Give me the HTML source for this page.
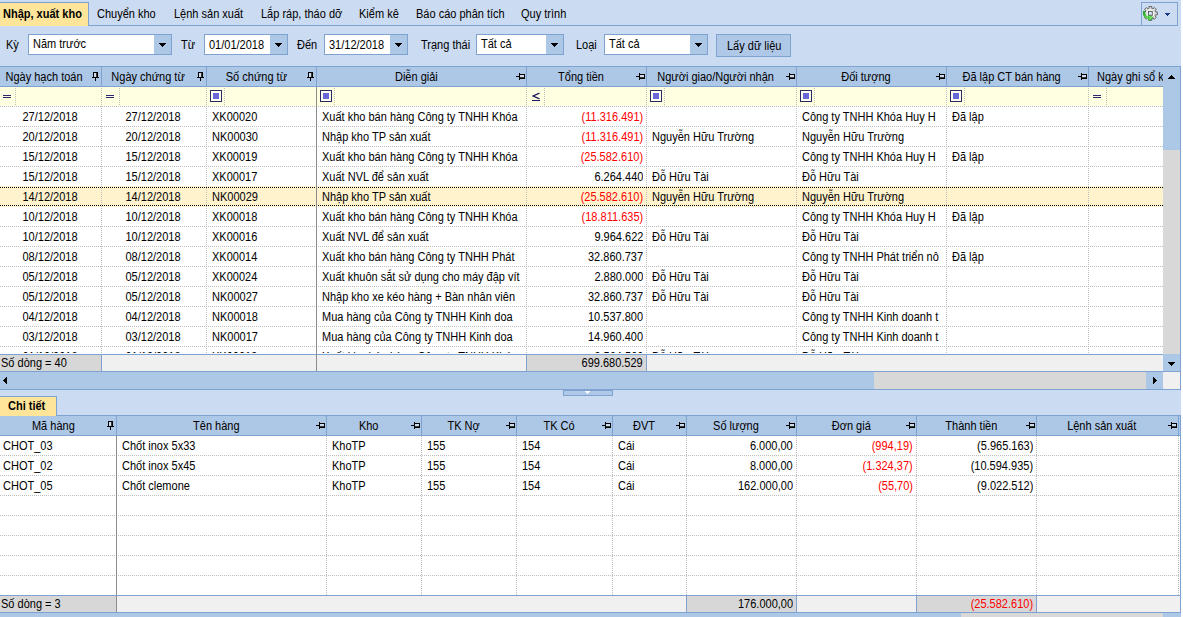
<!DOCTYPE html><html><head><meta charset="utf-8"><style>
html,body{margin:0;padding:0;}
body{width:1183px;height:617px;position:relative;overflow:hidden;background:#CBDBF1;font-family:"Liberation Sans",sans-serif;font-size:12px;color:#000;}
div{box-sizing:border-box;}
.t{position:absolute;white-space:nowrap;line-height:13px;}
.c{position:absolute;white-space:nowrap;overflow:hidden;}
.hl{position:absolute;height:1px;background-image:linear-gradient(to right,#BEBEBE 50%,transparent 50%);background-size:2px 1px;}
.vl{position:absolute;width:1px;background-image:linear-gradient(to bottom,#BEBEBE 50%,transparent 50%);background-size:1px 2px;}
.tri{position:absolute;width:0;height:0;border-left:4px solid transparent;border-right:4px solid transparent;border-top:4px solid #000;}

</style></head><body>
<div style="position:absolute;left:1181px;top:0px;width:2px;height:617px;background:#FDFDFE;"></div>
<div style="position:absolute;left:0px;top:25px;width:1141px;height:1px;background:#7EA3D0;"></div>
<div style="position:absolute;left:0px;top:2px;width:89px;height:24px;background:#FFE59A;border-right:1px solid #7EA3D0;border-top:1px solid #7EA3D0;"></div>
<div class="t" style="left:3px;top:7px;font-weight:bold;"><span style="display:inline-block;transform:translateY(1px) scaleX(0.917);transform-origin:0 50%">Nhập, xuất kho</span></div>
<div class="t" style="left:97px;top:7px;"><span style="display:inline-block;transform:translateY(1px) scaleX(0.917);transform-origin:0 50%">Chuyển kho</span></div>
<div class="t" style="left:174px;top:7px;"><span style="display:inline-block;transform:translateY(1px) scaleX(0.917);transform-origin:0 50%">Lệnh sản xuất</span></div>
<div class="t" style="left:261px;top:7px;"><span style="display:inline-block;transform:translateY(1px) scaleX(0.917);transform-origin:0 50%">Lắp ráp, tháo dỡ</span></div>
<div class="t" style="left:359px;top:7px;"><span style="display:inline-block;transform:translateY(1px) scaleX(0.917);transform-origin:0 50%">Kiểm kê</span></div>
<div class="t" style="left:416px;top:7px;"><span style="display:inline-block;transform:translateY(1px) scaleX(0.917);transform-origin:0 50%">Báo cáo phân tích</span></div>
<div class="t" style="left:521px;top:7px;"><span style="display:inline-block;transform:translateY(1px) scaleX(0.917);transform-origin:0 50%">Quy trình</span></div>
<div style="position:absolute;left:1141px;top:2px;width:37px;height:24px;border:1px solid #7EA3D0;"></div>
<svg style="position:absolute;left:1143px;top:6px" width="16" height="16" viewBox="0 0 16 16">
<defs><linearGradient id="gg" x1="0" y1="0" x2="1" y2="1"><stop offset="0" stop-color="#1FA01F"/><stop offset="1" stop-color="#6EEA5A"/></linearGradient></defs>
<g transform="translate(7.4,7.4)">
<path d="M-1.68,-5.03 L-1.28,-5.14 L-1.48,-6.94 L1.48,-6.94 L1.28,-5.14 L2.36,-4.74 L2.73,-4.54 L3.87,-5.95 L5.95,-3.87 L4.54,-2.73 L5.03,-1.68 L5.14,-1.28 L6.94,-1.48 L6.94,1.48 L5.14,1.28 L4.74,2.36 L4.54,2.73 L5.95,3.87 L3.87,5.95 L2.73,4.54 L1.68,5.03 L1.28,5.14 L1.48,6.94 L-1.48,6.94 L-1.28,5.14 L-2.36,4.74 L-2.73,4.54 L-3.87,5.95 L-5.95,3.87 L-4.54,2.73 L-5.03,1.68 L-5.14,1.28 L-6.94,1.48 L-6.94,-1.48 L-5.14,-1.28 L-4.74,-2.36 L-4.54,-2.73 L-5.95,-3.87 L-3.87,-5.95 L-2.73,-4.54 Z" fill="#DEDEDE" stroke="#666" stroke-width="1"/>
<circle r="3.9" fill="#F0F0F0"/>
<rect x="-1.9" y="-1.9" width="3.8" height="3.8" fill="#D6E6F8" stroke="#555" stroke-width="0.9"/>
</g>
<path d="M0.9,5 Q0.7,11.8 6.6,12.1" fill="none" stroke="url(#gg)" stroke-width="2.4"/>
<path d="M5.6,8.9 L10.4,11.7 L5.9,14.7 Z" fill="#6EE85A" stroke="#1C961C" stroke-width="0.6"/>
</svg>
<svg style="position:absolute;left:1165px;top:13px" width="5" height="3" shape-rendering="crispEdges" fill="#16388A"><rect x="0" y="0" width="5" height="1"/><rect x="1" y="1" width="3" height="1"/><rect x="2" y="2" width="1" height="1"/></svg>
<div class="t" style="left:6px;top:38px;"><span style="display:inline-block;transform:translateY(1px) scaleX(0.917);transform-origin:0 50%">Kỳ</span></div>
<div style="position:absolute;left:28px;top:34px;width:144px;height:21px;background:#fff;border:1px solid #7EA3D0;"></div>
<div style="position:absolute;left:154px;top:35px;width:17px;height:19px;background:#ADC7E6;"></div>
<svg style="position:absolute;left:159px;top:43px" width="7" height="4" shape-rendering="crispEdges" fill="#000"><rect x="0" y="0" width="7" height="1"/><rect x="1" y="1" width="5" height="1"/><rect x="2" y="2" width="3" height="1"/><rect x="3" y="3" width="1" height="1"/></svg>
<div class="t" style="left:33px;top:37px;"><span style="display:inline-block;transform:translateY(1px) scaleX(0.917);transform-origin:0 50%">Năm trước</span></div>
<div class="t" style="left:181px;top:38px;"><span style="display:inline-block;transform:translateY(1px) scaleX(0.917);transform-origin:0 50%">Từ</span></div>
<div style="position:absolute;left:204px;top:34px;width:84px;height:21px;background:#fff;border:1px solid #7EA3D0;"></div>
<div style="position:absolute;left:270px;top:35px;width:17px;height:19px;background:#ADC7E6;"></div>
<svg style="position:absolute;left:275px;top:43px" width="7" height="4" shape-rendering="crispEdges" fill="#000"><rect x="0" y="0" width="7" height="1"/><rect x="1" y="1" width="5" height="1"/><rect x="2" y="2" width="3" height="1"/><rect x="3" y="3" width="1" height="1"/></svg>
<div class="t" style="left:209px;top:38px;"><span style="display:inline-block;transform:translateY(1px) scaleX(0.917);transform-origin:0 50%">01/01/2018</span></div>
<div class="t" style="left:297px;top:38px;"><span style="display:inline-block;transform:translateY(1px) scaleX(0.917);transform-origin:0 50%">Đến</span></div>
<div style="position:absolute;left:324px;top:34px;width:84px;height:21px;background:#fff;border:1px solid #7EA3D0;"></div>
<div style="position:absolute;left:390px;top:35px;width:17px;height:19px;background:#ADC7E6;"></div>
<svg style="position:absolute;left:395px;top:43px" width="7" height="4" shape-rendering="crispEdges" fill="#000"><rect x="0" y="0" width="7" height="1"/><rect x="1" y="1" width="5" height="1"/><rect x="2" y="2" width="3" height="1"/><rect x="3" y="3" width="1" height="1"/></svg>
<div class="t" style="left:329px;top:38px;"><span style="display:inline-block;transform:translateY(1px) scaleX(0.917);transform-origin:0 50%">31/12/2018</span></div>
<div class="t" style="left:421px;top:38px;"><span style="display:inline-block;transform:translateY(1px) scaleX(0.917);transform-origin:0 50%">Trạng thái</span></div>
<div style="position:absolute;left:476px;top:34px;width:88px;height:21px;background:#fff;border:1px solid #7EA3D0;"></div>
<div style="position:absolute;left:546px;top:35px;width:17px;height:19px;background:#ADC7E6;"></div>
<svg style="position:absolute;left:551px;top:43px" width="7" height="4" shape-rendering="crispEdges" fill="#000"><rect x="0" y="0" width="7" height="1"/><rect x="1" y="1" width="5" height="1"/><rect x="2" y="2" width="3" height="1"/><rect x="3" y="3" width="1" height="1"/></svg>
<div class="t" style="left:481px;top:37px;"><span style="display:inline-block;transform:translateY(1px) scaleX(0.917);transform-origin:0 50%">Tất cả</span></div>
<div class="t" style="left:576px;top:38px;"><span style="display:inline-block;transform:translateY(1px) scaleX(0.917);transform-origin:0 50%">Loại</span></div>
<div style="position:absolute;left:604px;top:34px;width:104px;height:21px;background:#fff;border:1px solid #7EA3D0;"></div>
<div style="position:absolute;left:690px;top:35px;width:17px;height:19px;background:#ADC7E6;"></div>
<svg style="position:absolute;left:695px;top:43px" width="7" height="4" shape-rendering="crispEdges" fill="#000"><rect x="0" y="0" width="7" height="1"/><rect x="1" y="1" width="5" height="1"/><rect x="2" y="2" width="3" height="1"/><rect x="3" y="3" width="1" height="1"/></svg>
<div class="t" style="left:609px;top:37px;"><span style="display:inline-block;transform:translateY(1px) scaleX(0.917);transform-origin:0 50%">Tất cả</span></div>
<div style="position:absolute;left:716px;top:34px;width:75px;height:23px;background:#B0C8E8;border:1px solid #7EA3D0;"></div>
<div class="t" style="left:727px;top:39px;"><span style="display:inline-block;transform:translateY(1px) scaleX(0.917);transform-origin:0 50%">Lấy dữ liệu</span></div>
<div style="position:absolute;left:0px;top:66px;width:1181px;height:21px;background:#ADC7E6;border-top:1px solid #7EA3D0;border-right:1px solid #7EA3D0;"></div>
<div style="position:absolute;left:0px;top:86px;width:1163px;height:1px;background:#7EA3D0;"></div>
<div class="c" style="left:-2px;top:67px;width:92px;height:19px;line-height:19px;text-align:center;"><span style="display:inline-block;transform:translateY(1px) scaleX(0.917);transform-origin:50% 50%">Ngày hạch toán</span></div>
<svg style="position:absolute;left:92px;top:72px" width="7" height="9" viewBox="0 0 7 9" shape-rendering="crispEdges"><rect x="1" y="0" width="5" height="6" fill="#000"/><rect x="2" y="1" width="2" height="4" fill="#CCDDF2"/><rect x="4" y="1" width="1" height="4" fill="#3A3A3A"/><rect x="0" y="5" width="7" height="1" fill="#000"/><rect x="3" y="6" width="1" height="3" fill="#000"/></svg>
<div style="position:absolute;left:101px;top:67px;width:1px;height:19px;background:#7EA3D0;"></div>
<div class="c" style="left:101px;top:67px;width:95px;height:19px;line-height:19px;text-align:center;"><span style="display:inline-block;transform:translateY(1px) scaleX(0.917);transform-origin:50% 50%">Ngày chứng từ</span></div>
<svg style="position:absolute;left:197px;top:72px" width="7" height="9" viewBox="0 0 7 9" shape-rendering="crispEdges"><rect x="1" y="0" width="5" height="6" fill="#000"/><rect x="2" y="1" width="2" height="4" fill="#CCDDF2"/><rect x="4" y="1" width="1" height="4" fill="#3A3A3A"/><rect x="0" y="5" width="7" height="1" fill="#000"/><rect x="3" y="6" width="1" height="3" fill="#000"/></svg>
<div style="position:absolute;left:206px;top:67px;width:1px;height:19px;background:#7EA3D0;"></div>
<div class="c" style="left:206px;top:67px;width:100px;height:19px;line-height:19px;text-align:center;"><span style="display:inline-block;transform:translateY(1px) scaleX(0.917);transform-origin:50% 50%">Số chứng từ</span></div>
<svg style="position:absolute;left:307px;top:72px" width="7" height="9" viewBox="0 0 7 9" shape-rendering="crispEdges"><rect x="1" y="0" width="5" height="6" fill="#000"/><rect x="2" y="1" width="2" height="4" fill="#CCDDF2"/><rect x="4" y="1" width="1" height="4" fill="#3A3A3A"/><rect x="0" y="5" width="7" height="1" fill="#000"/><rect x="3" y="6" width="1" height="3" fill="#000"/></svg>
<div style="position:absolute;left:316px;top:67px;width:1px;height:19px;background:#7EA3D0;"></div>
<div class="c" style="left:316px;top:67px;width:200px;height:19px;line-height:19px;text-align:center;"><span style="display:inline-block;transform:translateY(1px) scaleX(0.917);transform-origin:50% 50%">Diễn giải</span></div>
<svg style="position:absolute;left:516px;top:73px" width="9" height="7" viewBox="0 0 9 7" shape-rendering="crispEdges"><rect x="0" y="3" width="3" height="1" fill="#000"/><rect x="3" y="0" width="1" height="7" fill="#000"/><rect x="4" y="1" width="5" height="5" fill="#000"/><rect x="4" y="2" width="4" height="2" fill="#CCDDF2"/><rect x="4" y="4" width="4" height="1" fill="#3A3A3A"/></svg>
<div style="position:absolute;left:526px;top:67px;width:1px;height:19px;background:#7EA3D0;"></div>
<div class="c" style="left:526px;top:67px;width:110px;height:19px;line-height:19px;text-align:center;"><span style="display:inline-block;transform:translateY(1px) scaleX(0.917);transform-origin:50% 50%">Tổng tiền</span></div>
<svg style="position:absolute;left:636px;top:73px" width="9" height="7" viewBox="0 0 9 7" shape-rendering="crispEdges"><rect x="0" y="3" width="3" height="1" fill="#000"/><rect x="3" y="0" width="1" height="7" fill="#000"/><rect x="4" y="1" width="5" height="5" fill="#000"/><rect x="4" y="2" width="4" height="2" fill="#CCDDF2"/><rect x="4" y="4" width="4" height="1" fill="#3A3A3A"/></svg>
<div style="position:absolute;left:646px;top:67px;width:1px;height:19px;background:#7EA3D0;"></div>
<div class="c" style="left:646px;top:67px;width:140px;height:19px;line-height:19px;text-align:center;"><span style="display:inline-block;transform:translateY(1px) scaleX(0.917);transform-origin:50% 50%">Người giao/Người nhận</span></div>
<svg style="position:absolute;left:786px;top:73px" width="9" height="7" viewBox="0 0 9 7" shape-rendering="crispEdges"><rect x="0" y="3" width="3" height="1" fill="#000"/><rect x="3" y="0" width="1" height="7" fill="#000"/><rect x="4" y="1" width="5" height="5" fill="#000"/><rect x="4" y="2" width="4" height="2" fill="#CCDDF2"/><rect x="4" y="4" width="4" height="1" fill="#3A3A3A"/></svg>
<div style="position:absolute;left:796px;top:67px;width:1px;height:19px;background:#7EA3D0;"></div>
<div class="c" style="left:796px;top:67px;width:140px;height:19px;line-height:19px;text-align:center;"><span style="display:inline-block;transform:translateY(1px) scaleX(0.917);transform-origin:50% 50%">Đối tượng</span></div>
<svg style="position:absolute;left:936px;top:73px" width="9" height="7" viewBox="0 0 9 7" shape-rendering="crispEdges"><rect x="0" y="3" width="3" height="1" fill="#000"/><rect x="3" y="0" width="1" height="7" fill="#000"/><rect x="4" y="1" width="5" height="5" fill="#000"/><rect x="4" y="2" width="4" height="2" fill="#CCDDF2"/><rect x="4" y="4" width="4" height="1" fill="#3A3A3A"/></svg>
<div style="position:absolute;left:946px;top:67px;width:1px;height:19px;background:#7EA3D0;"></div>
<div class="c" style="left:946px;top:67px;width:132px;height:19px;line-height:19px;text-align:center;"><span style="display:inline-block;transform:translateY(1px) scaleX(0.917);transform-origin:50% 50%">Đã lập CT bán hàng</span></div>
<svg style="position:absolute;left:1078px;top:73px" width="9" height="7" viewBox="0 0 9 7" shape-rendering="crispEdges"><rect x="0" y="3" width="3" height="1" fill="#000"/><rect x="3" y="0" width="1" height="7" fill="#000"/><rect x="4" y="1" width="5" height="5" fill="#000"/><rect x="4" y="2" width="4" height="2" fill="#CCDDF2"/><rect x="4" y="4" width="4" height="1" fill="#3A3A3A"/></svg>
<div style="position:absolute;left:1088px;top:67px;width:1px;height:19px;background:#7EA3D0;"></div>
<div class="c" style="left:1097px;top:67px;width:66px;height:19px;line-height:19px;width:66px;"><span style="display:inline-block;transform:translateY(1px) scaleX(0.917);transform-origin:0 50%">Ngày ghi sổ kho</span></div>
<div style="position:absolute;left:0px;top:87px;width:1163px;height:267px;background:#fff;"></div>
<div style="position:absolute;left:0px;top:87px;width:1163px;height:19px;background:#FFFFE1;"></div>
<div style="position:absolute;left:3px;top:95px;width:8px;height:1px;background:#2A2A6A;"></div>
<div style="position:absolute;left:3px;top:97px;width:8px;height:1px;background:#2A2A6A;"></div>
<div class="vl" style="left:15px;top:88px;height:17px;"></div>
<div style="position:absolute;left:106px;top:95px;width:8px;height:1px;background:#2A2A6A;"></div>
<div style="position:absolute;left:106px;top:97px;width:8px;height:1px;background:#2A2A6A;"></div>
<div class="vl" style="left:119px;top:88px;height:17px;"></div>
<div class="vl" style="left:101px;top:88px;height:17px;"></div>
<div style="position:absolute;left:210px;top:90px;width:12px;height:12px;border:1px solid #2A2860;background:#FFFDF0;"></div>
<div style="position:absolute;left:213px;top:93px;width:6px;height:6px;background:#6666D6;"></div>
<div class="vl" style="left:224px;top:88px;height:17px;"></div>
<div class="vl" style="left:206px;top:88px;height:17px;"></div>
<div style="position:absolute;left:320px;top:90px;width:12px;height:12px;border:1px solid #2A2860;background:#FFFDF0;"></div>
<div style="position:absolute;left:323px;top:93px;width:6px;height:6px;background:#6666D6;"></div>
<div class="vl" style="left:334px;top:88px;height:17px;"></div>
<svg style="position:absolute;left:532px;top:92px" width="9" height="10" viewBox="0 0 9 10"><polyline points="7.5,1.2 1.2,4 7.5,6.8" fill="none" stroke="#1E1E5E" stroke-width="1.3"/><rect x="0" y="8" width="8" height="1" fill="#1E1E5E"/></svg>
<div class="vl" style="left:544px;top:88px;height:17px;"></div>
<div class="vl" style="left:526px;top:88px;height:17px;"></div>
<div style="position:absolute;left:650px;top:90px;width:12px;height:12px;border:1px solid #2A2860;background:#FFFDF0;"></div>
<div style="position:absolute;left:653px;top:93px;width:6px;height:6px;background:#6666D6;"></div>
<div class="vl" style="left:664px;top:88px;height:17px;"></div>
<div class="vl" style="left:646px;top:88px;height:17px;"></div>
<div style="position:absolute;left:800px;top:90px;width:12px;height:12px;border:1px solid #2A2860;background:#FFFDF0;"></div>
<div style="position:absolute;left:803px;top:93px;width:6px;height:6px;background:#6666D6;"></div>
<div class="vl" style="left:814px;top:88px;height:17px;"></div>
<div class="vl" style="left:796px;top:88px;height:17px;"></div>
<div style="position:absolute;left:950px;top:90px;width:12px;height:12px;border:1px solid #2A2860;background:#FFFDF0;"></div>
<div style="position:absolute;left:953px;top:93px;width:6px;height:6px;background:#6666D6;"></div>
<div class="vl" style="left:964px;top:88px;height:17px;"></div>
<div class="vl" style="left:946px;top:88px;height:17px;"></div>
<div style="position:absolute;left:1093px;top:95px;width:8px;height:1px;background:#2A2A6A;"></div>
<div style="position:absolute;left:1093px;top:97px;width:8px;height:1px;background:#2A2A6A;"></div>
<div class="vl" style="left:1106px;top:88px;height:17px;"></div>
<div class="vl" style="left:1088px;top:88px;height:17px;"></div>
<div style="position:absolute;left:0;top:106px;width:1163px;height:247px;overflow:hidden;">
<div class="c" style="left:0px;top:0px;width:101px;height:20px;line-height:20px;text-align:center;"><span style="display:inline-block;transform:translateY(1px) scaleX(0.917);transform-origin:50% 50%">27/12/2018</span></div>
<div class="c" style="left:101px;top:0px;width:105px;height:20px;line-height:20px;text-align:center;"><span style="display:inline-block;transform:translateY(1px) scaleX(0.917);transform-origin:50% 50%">27/12/2018</span></div>
<div class="c" style="left:212px;top:0px;width:104px;height:20px;line-height:20px;"><span style="display:inline-block;transform:translateY(1px) scaleX(0.917);transform-origin:0 50%">XK00020</span></div>
<div class="c" style="left:322px;top:0px;width:204px;height:20px;line-height:20px;"><span style="display:inline-block;transform:translateY(1px) scaleX(0.917);transform-origin:0 50%">Xuất kho bán hàng Công ty TNHH Khóa</span></div>
<div class="c" style="left:526px;top:0px;width:117px;height:20px;line-height:20px;text-align:right;color:#F00;"><span style="display:inline-block;transform:translateY(1px) scaleX(0.917);transform-origin:100% 50%">(11.316.491)</span></div>
<div class="c" style="left:802px;top:0px;width:144px;height:20px;line-height:20px;"><span style="display:inline-block;transform:translateY(1px) scaleX(0.917);transform-origin:0 50%">Công ty TNHH Khóa Huy H</span></div>
<div class="c" style="left:952px;top:0px;width:136px;height:20px;line-height:20px;"><span style="display:inline-block;transform:translateY(1px) scaleX(0.917);transform-origin:0 50%">Đã lập</span></div>
<div class="hl" style="left:0;top:20px;width:1163px;"></div>
<div class="c" style="left:0px;top:20px;width:101px;height:20px;line-height:20px;text-align:center;"><span style="display:inline-block;transform:translateY(1px) scaleX(0.917);transform-origin:50% 50%">20/12/2018</span></div>
<div class="c" style="left:101px;top:20px;width:105px;height:20px;line-height:20px;text-align:center;"><span style="display:inline-block;transform:translateY(1px) scaleX(0.917);transform-origin:50% 50%">20/12/2018</span></div>
<div class="c" style="left:212px;top:20px;width:104px;height:20px;line-height:20px;"><span style="display:inline-block;transform:translateY(1px) scaleX(0.917);transform-origin:0 50%">NK00030</span></div>
<div class="c" style="left:322px;top:20px;width:204px;height:20px;line-height:20px;"><span style="display:inline-block;transform:translateY(1px) scaleX(0.917);transform-origin:0 50%">Nhập kho TP sản xuất</span></div>
<div class="c" style="left:526px;top:20px;width:117px;height:20px;line-height:20px;text-align:right;color:#F00;"><span style="display:inline-block;transform:translateY(1px) scaleX(0.917);transform-origin:100% 50%">(11.316.491)</span></div>
<div class="c" style="left:652px;top:20px;width:144px;height:20px;line-height:20px;"><span style="display:inline-block;transform:translateY(1px) scaleX(0.917);transform-origin:0 50%">Nguyễn Hữu Trường</span></div>
<div class="c" style="left:802px;top:20px;width:144px;height:20px;line-height:20px;"><span style="display:inline-block;transform:translateY(1px) scaleX(0.917);transform-origin:0 50%">Nguyễn Hữu Trường</span></div>
<div class="hl" style="left:0;top:40px;width:1163px;"></div>
<div class="c" style="left:0px;top:40px;width:101px;height:20px;line-height:20px;text-align:center;"><span style="display:inline-block;transform:translateY(1px) scaleX(0.917);transform-origin:50% 50%">15/12/2018</span></div>
<div class="c" style="left:101px;top:40px;width:105px;height:20px;line-height:20px;text-align:center;"><span style="display:inline-block;transform:translateY(1px) scaleX(0.917);transform-origin:50% 50%">15/12/2018</span></div>
<div class="c" style="left:212px;top:40px;width:104px;height:20px;line-height:20px;"><span style="display:inline-block;transform:translateY(1px) scaleX(0.917);transform-origin:0 50%">XK00019</span></div>
<div class="c" style="left:322px;top:40px;width:204px;height:20px;line-height:20px;"><span style="display:inline-block;transform:translateY(1px) scaleX(0.917);transform-origin:0 50%">Xuất kho bán hàng Công ty TNHH Khóa</span></div>
<div class="c" style="left:526px;top:40px;width:117px;height:20px;line-height:20px;text-align:right;color:#F00;"><span style="display:inline-block;transform:translateY(1px) scaleX(0.917);transform-origin:100% 50%">(25.582.610)</span></div>
<div class="c" style="left:802px;top:40px;width:144px;height:20px;line-height:20px;"><span style="display:inline-block;transform:translateY(1px) scaleX(0.917);transform-origin:0 50%">Công ty TNHH Khóa Huy H</span></div>
<div class="c" style="left:952px;top:40px;width:136px;height:20px;line-height:20px;"><span style="display:inline-block;transform:translateY(1px) scaleX(0.917);transform-origin:0 50%">Đã lập</span></div>
<div class="hl" style="left:0;top:60px;width:1163px;"></div>
<div class="c" style="left:0px;top:60px;width:101px;height:20px;line-height:20px;text-align:center;"><span style="display:inline-block;transform:translateY(1px) scaleX(0.917);transform-origin:50% 50%">15/12/2018</span></div>
<div class="c" style="left:101px;top:60px;width:105px;height:20px;line-height:20px;text-align:center;"><span style="display:inline-block;transform:translateY(1px) scaleX(0.917);transform-origin:50% 50%">15/12/2018</span></div>
<div class="c" style="left:212px;top:60px;width:104px;height:20px;line-height:20px;"><span style="display:inline-block;transform:translateY(1px) scaleX(0.917);transform-origin:0 50%">XK00017</span></div>
<div class="c" style="left:322px;top:60px;width:204px;height:20px;line-height:20px;"><span style="display:inline-block;transform:translateY(1px) scaleX(0.917);transform-origin:0 50%">Xuất NVL để sản xuất</span></div>
<div class="c" style="left:526px;top:60px;width:117px;height:20px;line-height:20px;text-align:right;"><span style="display:inline-block;transform:translateY(1px) scaleX(0.917);transform-origin:100% 50%">6.264.440</span></div>
<div class="c" style="left:652px;top:60px;width:144px;height:20px;line-height:20px;"><span style="display:inline-block;transform:translateY(1px) scaleX(0.917);transform-origin:0 50%">Đỗ Hữu Tài</span></div>
<div class="c" style="left:802px;top:60px;width:144px;height:20px;line-height:20px;"><span style="display:inline-block;transform:translateY(1px) scaleX(0.917);transform-origin:0 50%">Đỗ Hữu Tài</span></div>
<div class="hl" style="left:0;top:80px;width:1163px;"></div>
<div style="position:absolute;left:0px;top:80px;width:1163px;height:21px;background:#FFF3CE;"></div>
<div class="c" style="left:0px;top:80px;width:101px;height:20px;line-height:20px;text-align:center;"><span style="display:inline-block;transform:translateY(1px) scaleX(0.917);transform-origin:50% 50%">14/12/2018</span></div>
<div class="c" style="left:101px;top:80px;width:105px;height:20px;line-height:20px;text-align:center;"><span style="display:inline-block;transform:translateY(1px) scaleX(0.917);transform-origin:50% 50%">14/12/2018</span></div>
<div class="c" style="left:212px;top:80px;width:104px;height:20px;line-height:20px;"><span style="display:inline-block;transform:translateY(1px) scaleX(0.917);transform-origin:0 50%">NK00029</span></div>
<div class="c" style="left:322px;top:80px;width:204px;height:20px;line-height:20px;"><span style="display:inline-block;transform:translateY(1px) scaleX(0.917);transform-origin:0 50%">Nhập kho TP sản xuất</span></div>
<div class="c" style="left:526px;top:80px;width:117px;height:20px;line-height:20px;text-align:right;color:#F00;"><span style="display:inline-block;transform:translateY(1px) scaleX(0.917);transform-origin:100% 50%">(25.582.610)</span></div>
<div class="c" style="left:652px;top:80px;width:144px;height:20px;line-height:20px;"><span style="display:inline-block;transform:translateY(1px) scaleX(0.917);transform-origin:0 50%">Nguyễn Hữu Trường</span></div>
<div class="c" style="left:802px;top:80px;width:144px;height:20px;line-height:20px;"><span style="display:inline-block;transform:translateY(1px) scaleX(0.917);transform-origin:0 50%">Nguyễn Hữu Trường</span></div>
<div class="c" style="left:0px;top:100px;width:101px;height:20px;line-height:20px;text-align:center;"><span style="display:inline-block;transform:translateY(1px) scaleX(0.917);transform-origin:50% 50%">10/12/2018</span></div>
<div class="c" style="left:101px;top:100px;width:105px;height:20px;line-height:20px;text-align:center;"><span style="display:inline-block;transform:translateY(1px) scaleX(0.917);transform-origin:50% 50%">10/12/2018</span></div>
<div class="c" style="left:212px;top:100px;width:104px;height:20px;line-height:20px;"><span style="display:inline-block;transform:translateY(1px) scaleX(0.917);transform-origin:0 50%">XK00018</span></div>
<div class="c" style="left:322px;top:100px;width:204px;height:20px;line-height:20px;"><span style="display:inline-block;transform:translateY(1px) scaleX(0.917);transform-origin:0 50%">Xuất kho bán hàng Công ty TNHH Khóa</span></div>
<div class="c" style="left:526px;top:100px;width:117px;height:20px;line-height:20px;text-align:right;color:#F00;"><span style="display:inline-block;transform:translateY(1px) scaleX(0.917);transform-origin:100% 50%">(18.811.635)</span></div>
<div class="c" style="left:802px;top:100px;width:144px;height:20px;line-height:20px;"><span style="display:inline-block;transform:translateY(1px) scaleX(0.917);transform-origin:0 50%">Công ty TNHH Khóa Huy H</span></div>
<div class="c" style="left:952px;top:100px;width:136px;height:20px;line-height:20px;"><span style="display:inline-block;transform:translateY(1px) scaleX(0.917);transform-origin:0 50%">Đã lập</span></div>
<div class="hl" style="left:0;top:120px;width:1163px;"></div>
<div class="c" style="left:0px;top:120px;width:101px;height:20px;line-height:20px;text-align:center;"><span style="display:inline-block;transform:translateY(1px) scaleX(0.917);transform-origin:50% 50%">10/12/2018</span></div>
<div class="c" style="left:101px;top:120px;width:105px;height:20px;line-height:20px;text-align:center;"><span style="display:inline-block;transform:translateY(1px) scaleX(0.917);transform-origin:50% 50%">10/12/2018</span></div>
<div class="c" style="left:212px;top:120px;width:104px;height:20px;line-height:20px;"><span style="display:inline-block;transform:translateY(1px) scaleX(0.917);transform-origin:0 50%">XK00016</span></div>
<div class="c" style="left:322px;top:120px;width:204px;height:20px;line-height:20px;"><span style="display:inline-block;transform:translateY(1px) scaleX(0.917);transform-origin:0 50%">Xuất NVL để sản xuất</span></div>
<div class="c" style="left:526px;top:120px;width:117px;height:20px;line-height:20px;text-align:right;"><span style="display:inline-block;transform:translateY(1px) scaleX(0.917);transform-origin:100% 50%">9.964.622</span></div>
<div class="c" style="left:652px;top:120px;width:144px;height:20px;line-height:20px;"><span style="display:inline-block;transform:translateY(1px) scaleX(0.917);transform-origin:0 50%">Đỗ Hữu Tài</span></div>
<div class="c" style="left:802px;top:120px;width:144px;height:20px;line-height:20px;"><span style="display:inline-block;transform:translateY(1px) scaleX(0.917);transform-origin:0 50%">Đỗ Hữu Tài</span></div>
<div class="hl" style="left:0;top:140px;width:1163px;"></div>
<div class="c" style="left:0px;top:140px;width:101px;height:20px;line-height:20px;text-align:center;"><span style="display:inline-block;transform:translateY(1px) scaleX(0.917);transform-origin:50% 50%">08/12/2018</span></div>
<div class="c" style="left:101px;top:140px;width:105px;height:20px;line-height:20px;text-align:center;"><span style="display:inline-block;transform:translateY(1px) scaleX(0.917);transform-origin:50% 50%">08/12/2018</span></div>
<div class="c" style="left:212px;top:140px;width:104px;height:20px;line-height:20px;"><span style="display:inline-block;transform:translateY(1px) scaleX(0.917);transform-origin:0 50%">XK00014</span></div>
<div class="c" style="left:322px;top:140px;width:204px;height:20px;line-height:20px;"><span style="display:inline-block;transform:translateY(1px) scaleX(0.917);transform-origin:0 50%">Xuất kho bán hàng Công ty TNHH Phát</span></div>
<div class="c" style="left:526px;top:140px;width:117px;height:20px;line-height:20px;text-align:right;"><span style="display:inline-block;transform:translateY(1px) scaleX(0.917);transform-origin:100% 50%">32.860.737</span></div>
<div class="c" style="left:802px;top:140px;width:144px;height:20px;line-height:20px;"><span style="display:inline-block;transform:translateY(1px) scaleX(0.917);transform-origin:0 50%">Công ty TNHH Phát triển nô</span></div>
<div class="c" style="left:952px;top:140px;width:136px;height:20px;line-height:20px;"><span style="display:inline-block;transform:translateY(1px) scaleX(0.917);transform-origin:0 50%">Đã lập</span></div>
<div class="hl" style="left:0;top:160px;width:1163px;"></div>
<div class="c" style="left:0px;top:160px;width:101px;height:20px;line-height:20px;text-align:center;"><span style="display:inline-block;transform:translateY(1px) scaleX(0.917);transform-origin:50% 50%">05/12/2018</span></div>
<div class="c" style="left:101px;top:160px;width:105px;height:20px;line-height:20px;text-align:center;"><span style="display:inline-block;transform:translateY(1px) scaleX(0.917);transform-origin:50% 50%">05/12/2018</span></div>
<div class="c" style="left:212px;top:160px;width:104px;height:20px;line-height:20px;"><span style="display:inline-block;transform:translateY(1px) scaleX(0.917);transform-origin:0 50%">XK00024</span></div>
<div class="c" style="left:322px;top:160px;width:204px;height:20px;line-height:20px;"><span style="display:inline-block;transform:translateY(1px) scaleX(0.917);transform-origin:0 50%">Xuất khuôn sắt sử dụng cho máy đập vít</span></div>
<div class="c" style="left:526px;top:160px;width:117px;height:20px;line-height:20px;text-align:right;"><span style="display:inline-block;transform:translateY(1px) scaleX(0.917);transform-origin:100% 50%">2.880.000</span></div>
<div class="c" style="left:652px;top:160px;width:144px;height:20px;line-height:20px;"><span style="display:inline-block;transform:translateY(1px) scaleX(0.917);transform-origin:0 50%">Đỗ Hữu Tài</span></div>
<div class="c" style="left:802px;top:160px;width:144px;height:20px;line-height:20px;"><span style="display:inline-block;transform:translateY(1px) scaleX(0.917);transform-origin:0 50%">Đỗ Hữu Tài</span></div>
<div class="hl" style="left:0;top:180px;width:1163px;"></div>
<div class="c" style="left:0px;top:180px;width:101px;height:20px;line-height:20px;text-align:center;"><span style="display:inline-block;transform:translateY(1px) scaleX(0.917);transform-origin:50% 50%">05/12/2018</span></div>
<div class="c" style="left:101px;top:180px;width:105px;height:20px;line-height:20px;text-align:center;"><span style="display:inline-block;transform:translateY(1px) scaleX(0.917);transform-origin:50% 50%">05/12/2018</span></div>
<div class="c" style="left:212px;top:180px;width:104px;height:20px;line-height:20px;"><span style="display:inline-block;transform:translateY(1px) scaleX(0.917);transform-origin:0 50%">NK00027</span></div>
<div class="c" style="left:322px;top:180px;width:204px;height:20px;line-height:20px;"><span style="display:inline-block;transform:translateY(1px) scaleX(0.917);transform-origin:0 50%">Nhập kho xe kéo hàng + Bàn nhân viên</span></div>
<div class="c" style="left:526px;top:180px;width:117px;height:20px;line-height:20px;text-align:right;"><span style="display:inline-block;transform:translateY(1px) scaleX(0.917);transform-origin:100% 50%">32.860.737</span></div>
<div class="c" style="left:652px;top:180px;width:144px;height:20px;line-height:20px;"><span style="display:inline-block;transform:translateY(1px) scaleX(0.917);transform-origin:0 50%">Đỗ Hữu Tài</span></div>
<div class="c" style="left:802px;top:180px;width:144px;height:20px;line-height:20px;"><span style="display:inline-block;transform:translateY(1px) scaleX(0.917);transform-origin:0 50%">Đỗ Hữu Tài</span></div>
<div class="hl" style="left:0;top:200px;width:1163px;"></div>
<div class="c" style="left:0px;top:200px;width:101px;height:20px;line-height:20px;text-align:center;"><span style="display:inline-block;transform:translateY(1px) scaleX(0.917);transform-origin:50% 50%">04/12/2018</span></div>
<div class="c" style="left:101px;top:200px;width:105px;height:20px;line-height:20px;text-align:center;"><span style="display:inline-block;transform:translateY(1px) scaleX(0.917);transform-origin:50% 50%">04/12/2018</span></div>
<div class="c" style="left:212px;top:200px;width:104px;height:20px;line-height:20px;"><span style="display:inline-block;transform:translateY(1px) scaleX(0.917);transform-origin:0 50%">NK00018</span></div>
<div class="c" style="left:322px;top:200px;width:204px;height:20px;line-height:20px;"><span style="display:inline-block;transform:translateY(1px) scaleX(0.917);transform-origin:0 50%">Mua hàng của Công ty TNHH Kinh doa</span></div>
<div class="c" style="left:526px;top:200px;width:117px;height:20px;line-height:20px;text-align:right;"><span style="display:inline-block;transform:translateY(1px) scaleX(0.917);transform-origin:100% 50%">10.537.800</span></div>
<div class="c" style="left:802px;top:200px;width:144px;height:20px;line-height:20px;"><span style="display:inline-block;transform:translateY(1px) scaleX(0.917);transform-origin:0 50%">Công ty TNHH Kinh doanh t</span></div>
<div class="hl" style="left:0;top:220px;width:1163px;"></div>
<div class="c" style="left:0px;top:220px;width:101px;height:20px;line-height:20px;text-align:center;"><span style="display:inline-block;transform:translateY(1px) scaleX(0.917);transform-origin:50% 50%">03/12/2018</span></div>
<div class="c" style="left:101px;top:220px;width:105px;height:20px;line-height:20px;text-align:center;"><span style="display:inline-block;transform:translateY(1px) scaleX(0.917);transform-origin:50% 50%">03/12/2018</span></div>
<div class="c" style="left:212px;top:220px;width:104px;height:20px;line-height:20px;"><span style="display:inline-block;transform:translateY(1px) scaleX(0.917);transform-origin:0 50%">NK00017</span></div>
<div class="c" style="left:322px;top:220px;width:204px;height:20px;line-height:20px;"><span style="display:inline-block;transform:translateY(1px) scaleX(0.917);transform-origin:0 50%">Mua hàng của Công ty TNHH Kinh doa</span></div>
<div class="c" style="left:526px;top:220px;width:117px;height:20px;line-height:20px;text-align:right;"><span style="display:inline-block;transform:translateY(1px) scaleX(0.917);transform-origin:100% 50%">14.960.400</span></div>
<div class="c" style="left:802px;top:220px;width:144px;height:20px;line-height:20px;"><span style="display:inline-block;transform:translateY(1px) scaleX(0.917);transform-origin:0 50%">Công ty TNHH Kinh doanh t</span></div>
<div class="hl" style="left:0;top:240px;width:1163px;"></div>
<div class="c" style="left:0px;top:240px;width:101px;height:20px;line-height:20px;text-align:center;"><span style="display:inline-block;transform:translateY(1px) scaleX(0.917);transform-origin:50% 50%">01/12/2018</span></div>
<div class="c" style="left:101px;top:240px;width:105px;height:20px;line-height:20px;text-align:center;"><span style="display:inline-block;transform:translateY(1px) scaleX(0.917);transform-origin:50% 50%">01/12/2018</span></div>
<div class="c" style="left:212px;top:240px;width:104px;height:20px;line-height:20px;"><span style="display:inline-block;transform:translateY(1px) scaleX(0.917);transform-origin:0 50%">XK00013</span></div>
<div class="c" style="left:322px;top:240px;width:204px;height:20px;line-height:20px;"><span style="display:inline-block;transform:translateY(1px) scaleX(0.917);transform-origin:0 50%">Xuất kho bán hàng Công ty TNHH Khóa</span></div>
<div class="c" style="left:526px;top:240px;width:117px;height:20px;line-height:20px;text-align:right;"><span style="display:inline-block;transform:translateY(1px) scaleX(0.917);transform-origin:100% 50%">9.564.500</span></div>
<div class="c" style="left:652px;top:240px;width:144px;height:20px;line-height:20px;"><span style="display:inline-block;transform:translateY(1px) scaleX(0.917);transform-origin:0 50%">Đỗ Hữu Tài</span></div>
<div class="c" style="left:802px;top:240px;width:144px;height:20px;line-height:20px;"><span style="display:inline-block;transform:translateY(1px) scaleX(0.917);transform-origin:0 50%">Đỗ Hữu Tài</span></div>
<div class="hl" style="left:0;top:260px;width:1163px;"></div>
<div class="vl" style="left:101px;top:0;height:248px;"></div>
<div class="vl" style="left:206px;top:0;height:248px;"></div>
<div class="vl" style="left:526px;top:0;height:248px;"></div>
<div class="vl" style="left:646px;top:0;height:248px;"></div>
<div class="vl" style="left:796px;top:0;height:248px;"></div>
<div class="vl" style="left:946px;top:0;height:248px;"></div>
<div class="vl" style="left:1088px;top:0;height:248px;"></div>
<div class="hl" style="left:0;top:81px;width:1163px;background-image:linear-gradient(to right,#000 50%,transparent 50%);"></div>
<div class="hl" style="left:0;top:99px;width:1163px;background-image:linear-gradient(to right,#000 50%,transparent 50%);"></div>
</div>
<div class="hl" style="left:0;top:106px;width:1163px;"></div>
<div style="position:absolute;left:316px;top:87px;width:1px;height:284px;background:#8C8C8C;"></div>
<div style="position:absolute;left:1163px;top:67px;width:17px;height:83px;background:#ADC7E6;"></div>
<svg style="position:absolute;left:1168px;top:75px" width="7" height="4" shape-rendering="crispEdges" fill="#000"><rect x="0" y="3" width="7" height="1"/><rect x="1" y="2" width="5" height="1"/><rect x="2" y="1" width="3" height="1"/><rect x="3" y="0" width="1" height="1"/></svg>
<div style="position:absolute;left:1163px;top:150px;width:17px;height:204px;background:#D8D8D8;"></div>
<div style="position:absolute;left:1180px;top:66px;width:1px;height:323px;background:#7EA3D0;"></div>
<div style="position:absolute;left:0px;top:354px;width:1163px;height:17px;background:#F0F0F0;border-top:1px solid #7EA3D0;"></div>
<div style="position:absolute;left:0px;top:355px;width:101px;height:16px;background:#D7D7D7;"></div>
<div style="position:absolute;left:101px;top:355px;width:1px;height:16px;background:#7EA3D0;"></div>
<div style="position:absolute;left:316px;top:354px;width:1px;height:17px;background:#8C8C8C;"></div>
<div style="position:absolute;left:526px;top:355px;width:121px;height:16px;background:#D7D7D7;border-left:1px solid #7EA3D0;border-right:1px solid #7EA3D0;"></div>
<div class="t" style="left:1px;top:356px;"><span style="display:inline-block;transform:translateY(1px) scaleX(0.917);transform-origin:0 50%">Số dòng = 40</span></div>
<div class="c" style="left:526px;top:354px;width:117px;height:16px;line-height:16px;text-align:right;"><span style="display:inline-block;transform:translateY(1px) scaleX(0.917);transform-origin:100% 50%">699.680.529</span></div>
<div style="position:absolute;left:1163px;top:354px;width:17px;height:17px;background:#ADC7E6;"></div>
<svg style="position:absolute;left:1168px;top:362px" width="7" height="4" shape-rendering="crispEdges" fill="#000"><rect x="0" y="0" width="7" height="1"/><rect x="1" y="1" width="5" height="1"/><rect x="2" y="2" width="3" height="1"/><rect x="3" y="3" width="1" height="1"/></svg>
<div style="position:absolute;left:0px;top:371px;width:1181px;height:19px;background:#D8D8D8;border-top:1px solid #7EA3D0;border-bottom:1px solid #7EA3D0;border-right:1px solid #7EA3D0;"></div>
<div style="position:absolute;left:0px;top:372px;width:874px;height:17px;background:#ADC7E6;"></div>
<div style="position:absolute;left:1146px;top:372px;width:17px;height:17px;background:#ADC7E6;"></div>
<div style="position:absolute;left:1163px;top:372px;width:17px;height:17px;background:#F0F0F0;"></div>
<svg style="position:absolute;left:3px;top:377px" width="4" height="7" shape-rendering="crispEdges" fill="#000"><rect x="3" y="0" width="1" height="7"/><rect x="2" y="1" width="1" height="5"/><rect x="1" y="2" width="1" height="3"/><rect x="0" y="3" width="1" height="1"/></svg>
<svg style="position:absolute;left:1153px;top:377px" width="4" height="7" shape-rendering="crispEdges" fill="#000"><rect x="0" y="0" width="1" height="7"/><rect x="1" y="1" width="1" height="5"/><rect x="2" y="2" width="1" height="3"/><rect x="3" y="3" width="1" height="1"/></svg>
<div style="position:absolute;left:563px;top:390px;width:50px;height:6px;background:#AFC8E8;border:1px solid #7EA3D0;"></div>
<svg style="position:absolute;left:585px;top:391px" width="5" height="3" shape-rendering="crispEdges" fill="#fff"><rect x="0" y="0" width="5" height="1"/><rect x="1" y="1" width="3" height="1"/><rect x="2" y="2" width="1" height="1"/></svg>
<div style="position:absolute;left:0px;top:415px;width:1181px;height:21px;background:#ADC7E6;border-top:1px solid #7EA3D0;border-bottom:1px solid #7EA3D0;border-right:1px solid #7EA3D0;"></div>
<div style="position:absolute;left:0px;top:396px;width:57px;height:20px;background:#FFE59A;border-top:1px solid #7EA3D0;border-right:1px solid #7EA3D0;"></div>
<div class="t" style="left:8px;top:399px;font-weight:bold;"><span style="display:inline-block;transform:translateY(1px) scaleX(0.917);transform-origin:0 50%">Chi tiết</span></div>
<div class="c" style="left:0px;top:416px;width:106px;height:19px;line-height:19px;text-align:center;"><span style="display:inline-block;transform:translateY(1px) scaleX(0.917);transform-origin:50% 50%">Mã hàng</span></div>
<svg style="position:absolute;left:107px;top:421px" width="7" height="9" viewBox="0 0 7 9" shape-rendering="crispEdges"><rect x="1" y="0" width="5" height="6" fill="#000"/><rect x="2" y="1" width="2" height="4" fill="#CCDDF2"/><rect x="4" y="1" width="1" height="4" fill="#3A3A3A"/><rect x="0" y="5" width="7" height="1" fill="#000"/><rect x="3" y="6" width="1" height="3" fill="#000"/></svg>
<div style="position:absolute;left:116px;top:416px;width:1px;height:19px;background:#7EA3D0;"></div>
<div class="c" style="left:116px;top:416px;width:200px;height:19px;line-height:19px;text-align:center;"><span style="display:inline-block;transform:translateY(1px) scaleX(0.917);transform-origin:50% 50%">Tên hàng</span></div>
<svg style="position:absolute;left:316px;top:422px" width="9" height="7" viewBox="0 0 9 7" shape-rendering="crispEdges"><rect x="0" y="3" width="3" height="1" fill="#000"/><rect x="3" y="0" width="1" height="7" fill="#000"/><rect x="4" y="1" width="5" height="5" fill="#000"/><rect x="4" y="2" width="4" height="2" fill="#CCDDF2"/><rect x="4" y="4" width="4" height="1" fill="#3A3A3A"/></svg>
<div style="position:absolute;left:326px;top:416px;width:1px;height:19px;background:#7EA3D0;"></div>
<div class="c" style="left:326px;top:416px;width:85px;height:19px;line-height:19px;text-align:center;"><span style="display:inline-block;transform:translateY(1px) scaleX(0.917);transform-origin:50% 50%">Kho</span></div>
<svg style="position:absolute;left:411px;top:422px" width="9" height="7" viewBox="0 0 9 7" shape-rendering="crispEdges"><rect x="0" y="3" width="3" height="1" fill="#000"/><rect x="3" y="0" width="1" height="7" fill="#000"/><rect x="4" y="1" width="5" height="5" fill="#000"/><rect x="4" y="2" width="4" height="2" fill="#CCDDF2"/><rect x="4" y="4" width="4" height="1" fill="#3A3A3A"/></svg>
<div style="position:absolute;left:421px;top:416px;width:1px;height:19px;background:#7EA3D0;"></div>
<div class="c" style="left:421px;top:416px;width:85px;height:19px;line-height:19px;text-align:center;"><span style="display:inline-block;transform:translateY(1px) scaleX(0.917);transform-origin:50% 50%">TK Nợ</span></div>
<svg style="position:absolute;left:506px;top:422px" width="9" height="7" viewBox="0 0 9 7" shape-rendering="crispEdges"><rect x="0" y="3" width="3" height="1" fill="#000"/><rect x="3" y="0" width="1" height="7" fill="#000"/><rect x="4" y="1" width="5" height="5" fill="#000"/><rect x="4" y="2" width="4" height="2" fill="#CCDDF2"/><rect x="4" y="4" width="4" height="1" fill="#3A3A3A"/></svg>
<div style="position:absolute;left:516px;top:416px;width:1px;height:19px;background:#7EA3D0;"></div>
<div class="c" style="left:516px;top:416px;width:86px;height:19px;line-height:19px;text-align:center;"><span style="display:inline-block;transform:translateY(1px) scaleX(0.917);transform-origin:50% 50%">TK Có</span></div>
<svg style="position:absolute;left:602px;top:422px" width="9" height="7" viewBox="0 0 9 7" shape-rendering="crispEdges"><rect x="0" y="3" width="3" height="1" fill="#000"/><rect x="3" y="0" width="1" height="7" fill="#000"/><rect x="4" y="1" width="5" height="5" fill="#000"/><rect x="4" y="2" width="4" height="2" fill="#CCDDF2"/><rect x="4" y="4" width="4" height="1" fill="#3A3A3A"/></svg>
<div style="position:absolute;left:612px;top:416px;width:1px;height:19px;background:#7EA3D0;"></div>
<div class="c" style="left:612px;top:416px;width:64px;height:19px;line-height:19px;text-align:center;"><span style="display:inline-block;transform:translateY(1px) scaleX(0.917);transform-origin:50% 50%">ĐVT</span></div>
<svg style="position:absolute;left:676px;top:422px" width="9" height="7" viewBox="0 0 9 7" shape-rendering="crispEdges"><rect x="0" y="3" width="3" height="1" fill="#000"/><rect x="3" y="0" width="1" height="7" fill="#000"/><rect x="4" y="1" width="5" height="5" fill="#000"/><rect x="4" y="2" width="4" height="2" fill="#CCDDF2"/><rect x="4" y="4" width="4" height="1" fill="#3A3A3A"/></svg>
<div style="position:absolute;left:686px;top:416px;width:1px;height:19px;background:#7EA3D0;"></div>
<div class="c" style="left:686px;top:416px;width:100px;height:19px;line-height:19px;text-align:center;"><span style="display:inline-block;transform:translateY(1px) scaleX(0.917);transform-origin:50% 50%">Số lượng</span></div>
<svg style="position:absolute;left:786px;top:422px" width="9" height="7" viewBox="0 0 9 7" shape-rendering="crispEdges"><rect x="0" y="3" width="3" height="1" fill="#000"/><rect x="3" y="0" width="1" height="7" fill="#000"/><rect x="4" y="1" width="5" height="5" fill="#000"/><rect x="4" y="2" width="4" height="2" fill="#CCDDF2"/><rect x="4" y="4" width="4" height="1" fill="#3A3A3A"/></svg>
<div style="position:absolute;left:796px;top:416px;width:1px;height:19px;background:#7EA3D0;"></div>
<div class="c" style="left:796px;top:416px;width:110px;height:19px;line-height:19px;text-align:center;"><span style="display:inline-block;transform:translateY(1px) scaleX(0.917);transform-origin:50% 50%">Đơn giá</span></div>
<svg style="position:absolute;left:906px;top:422px" width="9" height="7" viewBox="0 0 9 7" shape-rendering="crispEdges"><rect x="0" y="3" width="3" height="1" fill="#000"/><rect x="3" y="0" width="1" height="7" fill="#000"/><rect x="4" y="1" width="5" height="5" fill="#000"/><rect x="4" y="2" width="4" height="2" fill="#CCDDF2"/><rect x="4" y="4" width="4" height="1" fill="#3A3A3A"/></svg>
<div style="position:absolute;left:916px;top:416px;width:1px;height:19px;background:#7EA3D0;"></div>
<div class="c" style="left:916px;top:416px;width:110px;height:19px;line-height:19px;text-align:center;"><span style="display:inline-block;transform:translateY(1px) scaleX(0.917);transform-origin:50% 50%">Thành tiền</span></div>
<svg style="position:absolute;left:1026px;top:422px" width="9" height="7" viewBox="0 0 9 7" shape-rendering="crispEdges"><rect x="0" y="3" width="3" height="1" fill="#000"/><rect x="3" y="0" width="1" height="7" fill="#000"/><rect x="4" y="1" width="5" height="5" fill="#000"/><rect x="4" y="2" width="4" height="2" fill="#CCDDF2"/><rect x="4" y="4" width="4" height="1" fill="#3A3A3A"/></svg>
<div style="position:absolute;left:1036px;top:416px;width:1px;height:19px;background:#7EA3D0;"></div>
<div class="c" style="left:1036px;top:416px;width:132px;height:19px;line-height:19px;text-align:center;"><span style="display:inline-block;transform:translateY(1px) scaleX(0.917);transform-origin:50% 50%">Lệnh sản xuất</span></div>
<svg style="position:absolute;left:1168px;top:422px" width="9" height="7" viewBox="0 0 9 7" shape-rendering="crispEdges"><rect x="0" y="3" width="3" height="1" fill="#000"/><rect x="3" y="0" width="1" height="7" fill="#000"/><rect x="4" y="1" width="5" height="5" fill="#000"/><rect x="4" y="2" width="4" height="2" fill="#CCDDF2"/><rect x="4" y="4" width="4" height="1" fill="#3A3A3A"/></svg>
<div style="position:absolute;left:0px;top:436px;width:1180px;height:159px;background:#fff;"></div>
<div class="c" style="left:3px;top:435px;width:113px;height:20px;line-height:20px;"><span style="display:inline-block;transform:translateY(1px) scaleX(0.917);transform-origin:0 50%">CHOT_03</span></div>
<div class="c" style="left:122px;top:435px;width:204px;height:20px;line-height:20px;"><span style="display:inline-block;transform:translateY(1px) scaleX(0.917);transform-origin:0 50%">Chốt inox 5x33</span></div>
<div class="c" style="left:332px;top:435px;width:89px;height:20px;line-height:20px;"><span style="display:inline-block;transform:translateY(1px) scaleX(0.917);transform-origin:0 50%">KhoTP</span></div>
<div class="c" style="left:427px;top:435px;width:89px;height:20px;line-height:20px;"><span style="display:inline-block;transform:translateY(1px) scaleX(0.917);transform-origin:0 50%">155</span></div>
<div class="c" style="left:522px;top:435px;width:90px;height:20px;line-height:20px;"><span style="display:inline-block;transform:translateY(1px) scaleX(0.917);transform-origin:0 50%">154</span></div>
<div class="c" style="left:618px;top:435px;width:68px;height:20px;line-height:20px;"><span style="display:inline-block;transform:translateY(1px) scaleX(0.917);transform-origin:0 50%">Cái</span></div>
<div class="c" style="left:686px;top:435px;width:107px;height:20px;line-height:20px;text-align:right;"><span style="display:inline-block;transform:translateY(1px) scaleX(0.917);transform-origin:100% 50%">6.000,00</span></div>
<div class="c" style="left:796px;top:435px;width:117px;height:20px;line-height:20px;text-align:right;color:#F00;"><span style="display:inline-block;transform:translateY(1px) scaleX(0.917);transform-origin:100% 50%">(994,19)</span></div>
<div class="c" style="left:916px;top:435px;width:117px;height:20px;line-height:20px;text-align:right;"><span style="display:inline-block;transform:translateY(1px) scaleX(0.917);transform-origin:100% 50%">(5.965.163)</span></div>
<div class="hl" style="left:0;top:455px;width:1180px;"></div>
<div class="c" style="left:3px;top:455px;width:113px;height:20px;line-height:20px;"><span style="display:inline-block;transform:translateY(1px) scaleX(0.917);transform-origin:0 50%">CHOT_02</span></div>
<div class="c" style="left:122px;top:455px;width:204px;height:20px;line-height:20px;"><span style="display:inline-block;transform:translateY(1px) scaleX(0.917);transform-origin:0 50%">Chốt inox 5x45</span></div>
<div class="c" style="left:332px;top:455px;width:89px;height:20px;line-height:20px;"><span style="display:inline-block;transform:translateY(1px) scaleX(0.917);transform-origin:0 50%">KhoTP</span></div>
<div class="c" style="left:427px;top:455px;width:89px;height:20px;line-height:20px;"><span style="display:inline-block;transform:translateY(1px) scaleX(0.917);transform-origin:0 50%">155</span></div>
<div class="c" style="left:522px;top:455px;width:90px;height:20px;line-height:20px;"><span style="display:inline-block;transform:translateY(1px) scaleX(0.917);transform-origin:0 50%">154</span></div>
<div class="c" style="left:618px;top:455px;width:68px;height:20px;line-height:20px;"><span style="display:inline-block;transform:translateY(1px) scaleX(0.917);transform-origin:0 50%">Cái</span></div>
<div class="c" style="left:686px;top:455px;width:107px;height:20px;line-height:20px;text-align:right;"><span style="display:inline-block;transform:translateY(1px) scaleX(0.917);transform-origin:100% 50%">8.000,00</span></div>
<div class="c" style="left:796px;top:455px;width:117px;height:20px;line-height:20px;text-align:right;color:#F00;"><span style="display:inline-block;transform:translateY(1px) scaleX(0.917);transform-origin:100% 50%">(1.324,37)</span></div>
<div class="c" style="left:916px;top:455px;width:117px;height:20px;line-height:20px;text-align:right;"><span style="display:inline-block;transform:translateY(1px) scaleX(0.917);transform-origin:100% 50%">(10.594.935)</span></div>
<div class="hl" style="left:0;top:475px;width:1180px;"></div>
<div class="c" style="left:3px;top:475px;width:113px;height:20px;line-height:20px;"><span style="display:inline-block;transform:translateY(1px) scaleX(0.917);transform-origin:0 50%">CHOT_05</span></div>
<div class="c" style="left:122px;top:475px;width:204px;height:20px;line-height:20px;"><span style="display:inline-block;transform:translateY(1px) scaleX(0.917);transform-origin:0 50%">Chốt clemone</span></div>
<div class="c" style="left:332px;top:475px;width:89px;height:20px;line-height:20px;"><span style="display:inline-block;transform:translateY(1px) scaleX(0.917);transform-origin:0 50%">KhoTP</span></div>
<div class="c" style="left:427px;top:475px;width:89px;height:20px;line-height:20px;"><span style="display:inline-block;transform:translateY(1px) scaleX(0.917);transform-origin:0 50%">155</span></div>
<div class="c" style="left:522px;top:475px;width:90px;height:20px;line-height:20px;"><span style="display:inline-block;transform:translateY(1px) scaleX(0.917);transform-origin:0 50%">154</span></div>
<div class="c" style="left:618px;top:475px;width:68px;height:20px;line-height:20px;"><span style="display:inline-block;transform:translateY(1px) scaleX(0.917);transform-origin:0 50%">Cái</span></div>
<div class="c" style="left:686px;top:475px;width:107px;height:20px;line-height:20px;text-align:right;"><span style="display:inline-block;transform:translateY(1px) scaleX(0.917);transform-origin:100% 50%">162.000,00</span></div>
<div class="c" style="left:796px;top:475px;width:117px;height:20px;line-height:20px;text-align:right;color:#F00;"><span style="display:inline-block;transform:translateY(1px) scaleX(0.917);transform-origin:100% 50%">(55,70)</span></div>
<div class="c" style="left:916px;top:475px;width:117px;height:20px;line-height:20px;text-align:right;"><span style="display:inline-block;transform:translateY(1px) scaleX(0.917);transform-origin:100% 50%">(9.022.512)</span></div>
<div class="hl" style="left:0;top:495px;width:1180px;"></div>
<div class="hl" style="left:0;top:515px;width:1180px;"></div>
<div class="hl" style="left:0;top:535px;width:1180px;"></div>
<div class="hl" style="left:0;top:555px;width:1180px;"></div>
<div class="hl" style="left:0;top:575px;width:1180px;"></div>
<div style="position:absolute;left:116px;top:436px;width:1px;height:159px;background:#8C8C8C;"></div>
<div class="vl" style="left:326px;top:436px;height:159px;"></div>
<div class="vl" style="left:421px;top:436px;height:159px;"></div>
<div class="vl" style="left:516px;top:436px;height:159px;"></div>
<div class="vl" style="left:612px;top:436px;height:159px;"></div>
<div class="vl" style="left:686px;top:436px;height:159px;"></div>
<div class="vl" style="left:796px;top:436px;height:159px;"></div>
<div class="vl" style="left:916px;top:436px;height:159px;"></div>
<div class="vl" style="left:1036px;top:436px;height:159px;"></div>
<div class="vl" style="left:1178px;top:436px;height:159px;"></div>
<div style="position:absolute;left:1178px;top:416px;width:1px;height:19px;background:#7EA3D0;"></div>
<div style="position:absolute;left:1180px;top:415px;width:1px;height:202px;background:#7EA3D0;"></div>
<div style="position:absolute;left:0px;top:595px;width:1181px;height:18px;background:#F0F0F0;border-top:1px solid #7EA3D0;border-right:1px solid #7EA3D0;"></div>
<div style="position:absolute;left:0px;top:596px;width:116px;height:16px;background:#D7D7D7;"></div>
<div style="position:absolute;left:116px;top:596px;width:1px;height:16px;background:#8C8C8C;"></div>
<div style="position:absolute;left:686px;top:596px;width:111px;height:16px;background:#D7D7D7;border-left:1px solid #7EA3D0;border-right:1px solid #7EA3D0;"></div>
<div style="position:absolute;left:916px;top:596px;width:121px;height:16px;background:#D7D7D7;border-left:1px solid #7EA3D0;border-right:1px solid #7EA3D0;"></div>
<div class="t" style="left:1px;top:597px;"><span style="display:inline-block;transform:translateY(1px) scaleX(0.917);transform-origin:0 50%">Số dòng = 3</span></div>
<div class="c" style="left:686px;top:595px;width:107px;height:16px;line-height:16px;text-align:right;"><span style="display:inline-block;transform:translateY(1px) scaleX(0.917);transform-origin:100% 50%">176.000,00</span></div>
<div class="c" style="left:916px;top:595px;width:117px;height:16px;line-height:16px;text-align:right;color:#F00;"><span style="display:inline-block;transform:translateY(1px) scaleX(0.917);transform-origin:100% 50%">(25.582.610)</span></div>
<div style="position:absolute;left:0px;top:612px;width:1181px;height:5px;background:#ADC7E6;border-top:1px solid #7EA3D0;"></div>
<div style="position:absolute;left:961px;top:613px;width:202px;height:4px;background:#D8D8D8;"></div>
</body></html>
